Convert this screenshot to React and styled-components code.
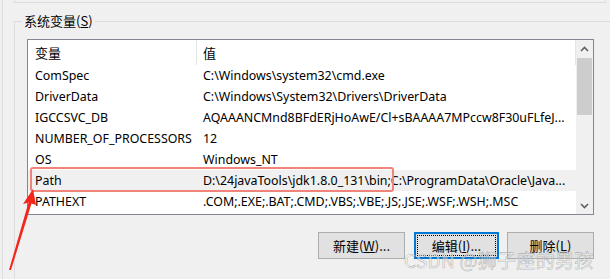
import styled, { createGlobalStyle } from "styled-components";

const Global = createGlobalStyle`
  html, body { margin: 0; padding: 0; }
  body {
    background: #f0f0f0;
    font-family: "Noto Sans", "Noto Sans CJK SC", sans-serif;
    font-size: 12.4px;
    color: #000;
  }
`;

const Page = styled.div`
  position: relative;
  width: 610px;
  height: 279px;
  overflow: hidden;
  background: #f0f0f0;
  padding-left: 2px;
  box-sizing: border-box;
`;

const Dialog = styled.div`
  height: 100%;
  border-left: 1px solid #dcdcdc;
  padding-left: 11px;
`;

const PrevGroup = styled.div`
  width: 590px;
  height: 2px;
  border: 1px solid #dcdcdc;
  border-top: none;
`;

const Group = styled.div`
  position: relative;
  margin-top: 18px;
  width: 590px;
  height: 254px;
  border: 1px solid #dcdcdc;
  padding: 17px 11px 0 12px;
`;

const Legend = styled.div`
  position: absolute;
  top: -9px;
  left: 7px;
  padding: 0 2px;
  background: #f0f0f0;
  font-family: "Noto Sans CJK SC", sans-serif;
  font-size: 13px;
  line-height: 16px;
  u { text-decoration: underline; }
`;

const List = styled.div`
  position: relative;
  width: 565px;
  height: 174px;
  border: 1px solid #828790;
  background: #fff;
  display: flex;
`;

const Columns = styled.div`
  flex: 1;
  display: flex;
  flex-direction: column;
`;

const HeaderRow = styled.div`
  height: 25px;
  display: flex;
  align-items: center;
  font-family: "Noto Sans CJK SC", sans-serif;
  font-size: 13px;
`;

const Row = styled.div`
  height: 21px;
  display: flex;
  align-items: center;
  background: ${(p) => (p.$selected ? "#f0f0f0" : "transparent")};
  white-space: nowrap;
`;

const NameCell = styled.div`
  box-sizing: border-box;
  width: 169px;
  padding-left: 7px;
  height: 100%;
  display: flex;
  align-items: center;
  border-right: ${(p) => (p.$head ? "1px solid #e5e5e5" : "1px solid transparent")};
  overflow: hidden;
`;

const ValueCell = styled.div`
  box-sizing: border-box;
  flex: 1;
  padding-left: 6px;
  height: 100%;
  display: flex;
  align-items: center;
  border-right: ${(p) => (p.$head ? "1px solid #e5e5e5" : "none")};
  overflow: hidden;
`;

const ScrollBar = styled.div`
  width: 17px;
  background: #f0f0f0;
  display: flex;
  flex-direction: column;
  align-items: center;
`;

const Arrow = styled.div`
  height: 17px;
  width: 17px;
  display: flex;
  align-items: center;
  justify-content: center;
`;

const Track = styled.div`
  flex: 1;
  width: 100%;
  padding-top: 1px;
`;

const Thumb = styled.div`
  margin: 0 1px;
  height: 57px;
  background: #cdcdcd;
`;

const Buttons = styled.div`
  display: flex;
  justify-content: flex-end;
  margin-top: 17px;
  width: 567px;
`;

const Button = styled.div`
  width: ${(p) => p.$w || 87}px;
  margin-left: ${(p) => p.$gap || 0}px;
  height: 27px;
  box-sizing: border-box;
  background: #e1e1e1;
  border: ${(p) => (p.$focus ? "2px solid #0078d7" : "1px solid #adadad")};
  display: flex;
  align-items: center;
  justify-content: center;
  font-family: "Noto Sans CJK SC", sans-serif;
  font-size: 13px;
  position: relative;
  &::after {
    content: "";
    display: ${(p) => (p.$focus ? "block" : "none")};
    position: absolute;
    inset: 1px;
    border: 1px dotted #000;
  }
  u { text-decoration: underline; }
`;

const Highlight = styled.div`
  position: absolute;
  left: 2px;
  top: 127px;
  width: 360px;
  height: 21px;
  border: 2px solid #f0837a;
  border-radius: 3px;
  pointer-events: none;
`;

const Watermark = styled.div`
  position: absolute;
  left: 404px;
  top: 246px;
  font-family: "Noto Sans CJK SC", sans-serif;
  font-size: 19px;
  color: rgba(255, 255, 255, 0.55);
  -webkit-text-stroke: 0.6px rgba(140, 140, 140, 0.6);
  white-space: nowrap;
  letter-spacing: 0.3px;
`;

const Annotation = styled.svg`
  position: absolute;
  left: 0;
  top: 0;
  pointer-events: none;
`;

const rows = [
  ["ComSpec", "C:\\Windows\\system32\\cmd.exe"],
  ["DriverData", "C:\\Windows\\System32\\Drivers\\DriverData"],
  ["IGCCSVC_DB", "AQAAANCMnd8BFdERjHoAwE/Cl+sBAAAA7MPccw8F30uFLfeJ..."],
  ["NUMBER_OF_PROCESSORS", "12"],
  ["OS", "Windows_NT"],
  ["Path", "D:\\24javaTools\\jdk1.8.0_131\\bin;C:\\ProgramData\\Oracle\\Java..."],
  ["PATHEXT", ".COM;.EXE;.BAT;.CMD;.VBS;.VBE;.JS;.JSE;.WSF;.WSH;.MSC"],
];

const Chevron = ({ down }) => (
  <svg width="9" height="6" viewBox="0 0 9 6">
    <path
      d={down ? "M1 1 L4.5 4.5 L8 1" : "M1 5 L4.5 1.5 L8 5"}
      fill="none"
      stroke="#606060"
      strokeWidth="1.6"
    />
  </svg>
);

export default function App() {
  return (
    <>
      <Global />
      <Page>
        <Dialog>
          <PrevGroup />
          <Group>
            <Legend>
              系统变量(<u>S</u>)
            </Legend>
            <List>
              <Columns>
                <HeaderRow>
                  <NameCell $head>变量</NameCell>
                  <ValueCell $head>值</ValueCell>
                </HeaderRow>
                {rows.map(([name, value]) => (
                  <Row key={name} $selected={name === "Path"}>
                    <NameCell>{name}</NameCell>
                    <ValueCell>{value}</ValueCell>
                  </Row>
                ))}
              </Columns>
              <ScrollBar>
                <Arrow>
                  <Chevron />
                </Arrow>
                <Track>
                  <Thumb />
                </Track>
                <Arrow>
                  <Chevron down />
                </Arrow>
              </ScrollBar>
              <Highlight />
            </List>
            <Buttons>
              <Button>
                新建(<u>W</u>)...
              </Button>
              <Button $focus $w={85} $gap={9}>
                编辑(<u>I</u>)...
              </Button>
              <Button $gap={8}>
                删除(<u>L</u>)
              </Button>
            </Buttons>
          </Group>
        </Dialog>
        <Watermark>CSDN @狮子座的男孩</Watermark>
        <Annotation width="610" height="279" viewBox="0 0 610 279">
          <polygon
            points="33,189 23,204 28.5,202.5 9,270 11,270 31.5,203.5 36,205"
            fill="#f2261a"
          />
        </Annotation>
      </Page>
    </>
  );
}
